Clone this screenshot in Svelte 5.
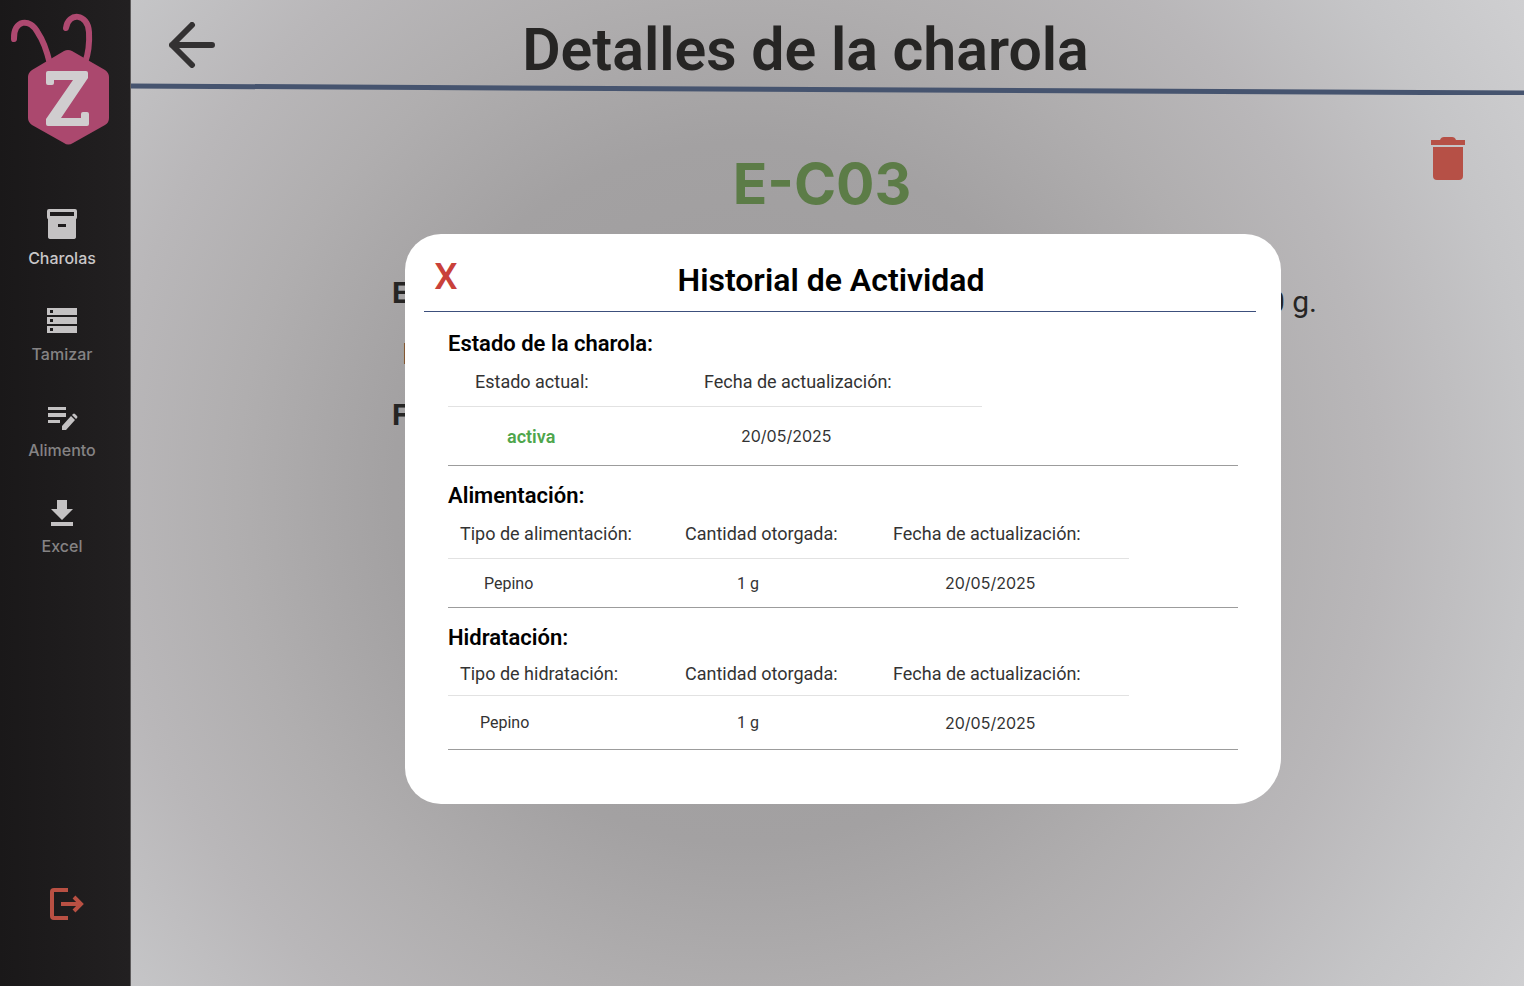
<script>
  let open = true;

  const tables = [
    {
      name: "estado",
      title: "Estado de la charola:",
      head: ["Estado actual:", "Fecha de actualización:"],
      row: ["activa", "20/05/2025"],
    },
    {
      name: "alimento",
      title: "Alimentación:",
      head: ["Tipo de alimentación:", "Cantidad otorgada:", "Fecha de actualización:"],
      row: ["Pepino", "1 g", "20/05/2025"],
    },
    {
      name: "agua",
      title: "Hidratación:",
      head: ["Tipo de hidratación:", "Cantidad otorgada:", "Fecha de actualización:"],
      row: ["Pepino", "1 g", "20/05/2025"],
    },
  ];
</script>

<div class="page">
  <aside class="sidebar">
    <svg class="logo" viewBox="0 0 131 150" aria-label="Z">
      <path class="antenna" d="M14 39C13 20 30 17 38 33Q45 43 50 64M66 28C68 12 88 13 89 32Q90 49 85 63" />
      <path class="body" d="M64 51q4-2 8 0l33 19q4 3 4 7v41q0 5-4 7l-32 18q-5 3-9 0l-32-18q-4-3-4-7V77q0-4 4-7z" />
      <path class="zeta" d="M48 71h38q2 0 2 2v5L61 118h20v-4q0-2 2-2h4q2 0 2 2v10q0 2-2 2H48q-2 0-2-2v-5l27-39H54v3q0 2-2 2h-4q-2 0-2-2V73q0-2 2-2z" />
    </svg>
    <nav>
      <a href="#charolas" class="active">
        <svg viewBox="0 0 32 32">
          <path fill-rule="evenodd" d="M3 1h26q2 0 2 2v6q0 2-1 2v18q0 2-3 2H5q-3 0-3-2V11q-1 0-1-2V3q0-2 2-2zm1 3v4h24V4zm8 12v3h8v-3z" />
        </svg>
        <span>Charolas</span>
      </a>
      <a href="#tamizar">
        <svg viewBox="0 0 32 32">
          <path fill-rule="evenodd" d="M1 4h30v7H1zm3 2v3h3V6zM1 13h30v7H1zm3 2v3h3v-3zM1 22h30v7H1zm3 2v3h3v-3z" />
        </svg>
        <span>Tamizar</span>
      </a>
      <a href="#alimento">
        <svg viewBox="0 0 32 32">
          <path d="M2 7h18v3H2zm0 6h18v4H2zm0 7h12v3H2zm14 6 9-10 4 4-9 10h-4zM26 15l1-1q1-1 2 0l2 2q1 1 0 2l-1 1z" />
        </svg>
        <span>Alimento</span>
      </a>
      <a href="#excel">
        <svg viewBox="0 0 32 32">
          <path d="M11 4h10v9h6L16 24 5 13h6zM5 26h22v4H5z" />
        </svg>
        <span>Excel</span>
      </a>
    </nav>
    <button class="logout" aria-label="Salir">
      <svg viewBox="0 0 36 32">
        <path d="M19 2H5Q3 2 3 4v24q0 2 2 2h14M12 16h19M25 9l7 7-7 7" />
      </svg>
    </button>
  </aside>

  <main>
    <header class="topbar">
      <button class="back" aria-label="Volver">
        <svg viewBox="0 0 46 46">
          <path d="M23 3 3 23l20 20M3 23h40" />
        </svg>
      </button>
      <h1>Detalles de la charola</h1>
    </header>
    <svg class="line" viewBox="0 0 100 12" preserveAspectRatio="none">
      <path d="M0 3 100 10" />
    </svg>
    <div class="code">
      <h2>E-C03</h2>
      <button class="trash" aria-label="Eliminar">
        <svg viewBox="0 0 36 46">
          <path d="M1 4h9q1-3 4-3h8q3 0 4 3h9v5H1zM3 11h30v29q0 4-4 4H7q-4 0-4-4z" />
        </svg>
      </button>
    </div>
    <div class="details">
      <div class="labels">
        <strong>E</strong>
        <span>D</span>
        <strong>F</strong>
      </div>
      <p>0 g.</p>
    </div>
  </main>

  {#if open}
    <div class="overlay">
      <div class="modal" role="dialog" aria-labelledby="titulo">
        <div class="modal-head">
          <button aria-label="Cerrar" on:click={() => (open = false)}>X</button>
          <h2 id="titulo">Historial de Actividad</h2>
        </div>
        {#each tables as t}
          <section class={t.name}>
            <h3>{t.title}</h3>
            <table>
              <thead>
                <tr>
                  {#each t.head as h}
                    <th>{h}</th>
                  {/each}
                </tr>
              </thead>
              <tbody>
                <tr>
                  {#each t.row as cell}
                    <td class:green={cell == "activa"}>{cell}</td>
                  {/each}
                </tr>
              </tbody>
            </table>
          </section>
        {/each}
      </div>
    </div>
  {/if}
</div>

<style>
  :global(body) {
    margin: 0;
  }
  .page {
    display: flex;
    position: relative;
    min-height: 100vh;
    font-family: Roboto, "Liberation Sans", sans-serif;
    color: #262524;
  }
  h1,
  h2,
  h3,
  p {
    margin: 0;
  }
  button {
    background: none;
    border: none;
    padding: 0;
    font-family: inherit;
    cursor: pointer;
  }
  svg {
    display: block;
  }
  .sidebar {
    width: 130px;
    flex-shrink: 0;
    display: flex;
    flex-direction: column;
    align-items: center;
    background: linear-gradient(90deg, #1a1819, #222021);
    border-right: 1px solid #5c5a5b;
  }
  .logo {
    width: 131px;
    height: 150px;
  }
  .antenna {
    fill: none;
    stroke: #ae4970;
    stroke-width: 6px;
    stroke-linecap: round;
  }
  .body {
    fill: #ab486e;
  }
  .zeta {
    fill: #d0cdcf;
  }
  nav {
    display: flex;
    flex-direction: column;
    gap: 35px;
    padding: 58px 6px 0 0;
  }
  nav a {
    display: flex;
    flex-direction: column;
    align-items: center;
    gap: 7px;
    font: 500 16px/22px Inter, sans-serif;
    color: #858384;
    text-decoration: none;
  }
  nav a.active {
    color: #c9c7c8;
  }
  nav svg {
    width: 32px;
    height: 32px;
    fill: #c4c2c3;
  }
  .logout {
    margin: auto 0 66px 4px;
  }
  .logout svg {
    width: 36px;
    height: 32px;
    fill: none;
    stroke: #b95043;
    stroke-width: 4px;
  }
  main {
    flex: 1;
    background: radial-gradient(
      circle farthest-corner at 44% 50%,
      #9d9b9c 0%,
      #a3a1a2 38%,
      #b0aeaf 55%,
      #b9b7b9 69%,
      #c5c5c7 85%,
      #cfcfd1 100%
    );
  }
  .topbar {
    display: grid;
    grid-template-columns: 45px 1fr 127px;
    align-items: center;
    height: 83px;
    padding-left: 38px;
  }
  .back {
    padding-top: 6px;
  }
  .back svg {
    width: 46px;
    height: 46px;
    fill: none;
    stroke: #333132;
    stroke-width: 6px;
    stroke-linecap: round;
    stroke-linejoin: round;
  }
  h1 {
    padding-top: 16px;
    text-align: center;
    font-size: 59px;
    line-height: 66px;
    font-weight: 600;
  }
  .line {
    width: 100%;
    height: 12px;
  }
  .line path {
    stroke: #46546f;
    stroke-width: 5px;
    vector-effect: non-scaling-stroke;
  }
  .code {
    display: grid;
    grid-template-columns: 1fr 36px;
    padding: 41px 58px 0 83px;
  }
  .code h2 {
    text-align: center;
    font-family: Inter, sans-serif;
    font-size: 57px;
    line-height: 96px;
    font-weight: 700;
    color: #5c7c47;
  }
  .trash {
    align-self: start;
  }
  .trash svg {
    width: 36px;
    height: 46px;
    fill: #b65046;
  }
  .details {
    display: flex;
    justify-content: space-between;
    padding: 30px 207px 0 261px;
    font-size: 30px;
    line-height: 61px;
  }
  .labels {
    display: flex;
    flex-direction: column;
  }
  .labels span {
    padding-left: 10px;
  }
  .details p {
    padding-top: 9px;
  }
  .overlay {
    position: absolute;
    inset: 0;
    display: flex;
    justify-content: center;
    align-items: flex-start;
    padding: 234px 0 0 162px;
  }
  .modal {
    width: 832px;
    padding: 0 25px 54px 19px;
    background: #fff;
    border-radius: 36px 36px 46px 36px;
    color: #000;
  }
  .modal-head {
    display: grid;
    grid-template-columns: 44px 1fr 62px;
    height: 77px;
    border-bottom: 1px solid #3c4f7c;
  }
  .modal-head button {
    align-self: center;
    padding-top: 9px;
    font-size: 37px;
    line-height: 40px;
    font-weight: 500;
    color: #c9413a;
  }
  .modal-head h2 {
    padding-top: 16px;
    text-align: center;
    font-size: 32px;
    line-height: 60px;
    font-weight: 600;
  }
  section {
    margin: 0 18px 0 24px;
    padding-top: 17px;
    border-bottom: 1px solid #9c9c9c;
  }
  h3 {
    font-size: 22px;
    line-height: 26px;
    font-weight: 600;
  }
  table {
    width: 681px;
    table-layout: fixed;
    border-collapse: collapse;
    color: #333;
  }
  th,
  td {
    height: 48px;
    padding: 0 0 0 12px;
    text-align: left;
    white-space: nowrap;
  }
  th {
    height: 49px;
    font-size: 18px;
    font-weight: 400;
    border-bottom: 1px solid #e2e2e2;
  }
  td {
    font-size: 16px;
    padding-left: 64px;
  }
  td:last-child {
    font-family: Inter, sans-serif;
  }
  th:first-child {
    width: 213px;
  }
  th:nth-child(2) {
    width: 196px;
  }
  td:first-child {
    padding-left: 36px;
  }
  .estado {
    padding-top: 19px;
  }
  .estado table {
    width: 534px;
  }
  .estado th {
    padding-left: 27px;
  }
  .estado th:first-child {
    width: 202px;
  }
  .estado th:last-child {
    width: auto;
  }
  .estado td {
    height: 58px;
  }
  .estado td:first-child {
    padding-left: 59px;
  }
  .agua th {
    height: 44px;
  }
  .agua td {
    height: 53px;
  }
  .agua td:first-child {
    padding-left: 32px;
  }
  td.green {
    font-size: 18px;
    font-weight: 600;
    color: #4fa64c;
  }
</style>
